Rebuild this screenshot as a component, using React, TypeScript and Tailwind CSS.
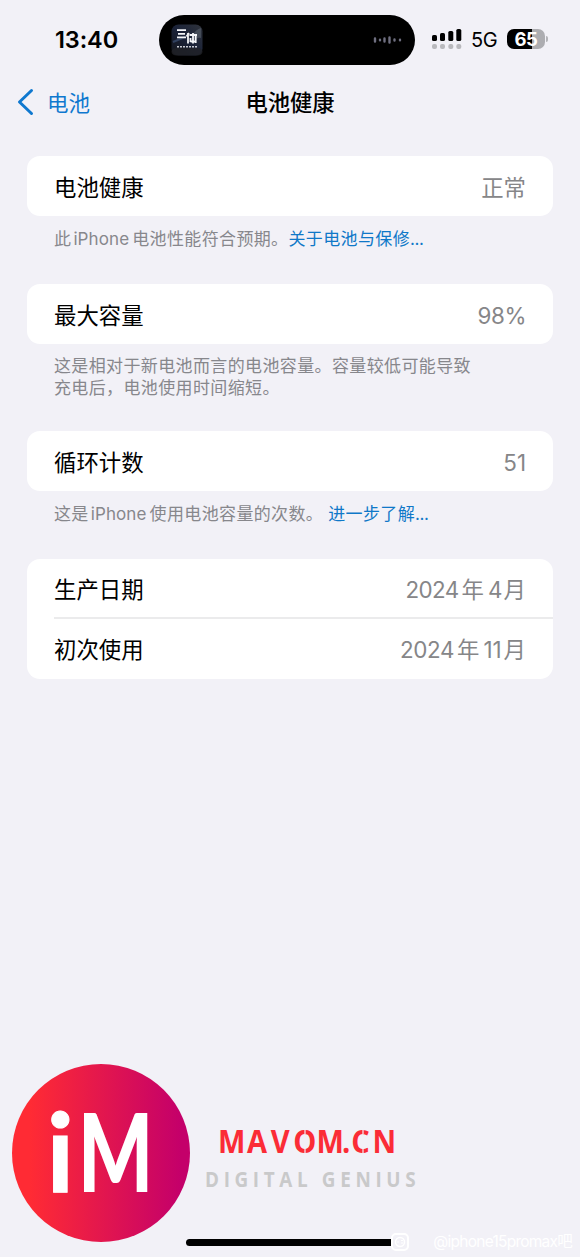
import React from "react";

type Row = { label: string; value: React.ReactNode };

function Latin({ children, className = "" }: { children: React.ReactNode; className?: string }) {
  return <span className={`font-['Inter'] ${className}`}>{children}</span>;
}

function StatusBar() {
  return (
    <div className="flex h-[80px] items-start">
      <div className="w-[159px] pl-[55px] pt-[24px] text-[23.5px] font-semibold leading-[32px] tracking-[-0.1px]">
        13:40
      </div>
      <div className="mt-[15px] flex h-[50px] w-[256px] items-center justify-between rounded-full bg-black pl-[12px] pr-[13px]">
        <svg width="32" height="32" viewBox="0 0 32 32">
          <defs>
            <linearGradient id="cover" x1="0" y1="1" x2="1" y2="0">
              <stop offset="0" stopColor="#14161c" />
              <stop offset="0.5" stopColor="#1a2238" />
              <stop offset="1" stopColor="#30343c" />
            </linearGradient>
          </defs>
          <rect x="0.5" y="0.5" width="31" height="31" rx="7" fill="url(#cover)" />
          <path d="M21 12 Q25 5 30 4 L30 14 Q26 13 22 18Z" fill="#59606d" opacity="0.6" />
          <path d="M2 18 L14 13" stroke="#31415f" strokeWidth="2" />
          <rect x="0.5" y="24" width="31" height="7.5" rx="5" fill="#202227" opacity="0.8" />
          <path
            d="M6 6.2H15M7 9.8H14M6 13.4H15M17 9V19.5M15.5 12.5L18 9M18.5 11H26M22 9V19.5M19.5 14V18M24.7 11V19M19.5 17.5H24.5"
            stroke="#f4f5f8"
            strokeWidth="1.8"
            fill="none"
          />
          <path d="M6 22.7H26" stroke="#c8cad0" strokeWidth="1.6" strokeDasharray="2 1" />
        </svg>
        <svg width="29" height="8" viewBox="0 0 29 8" stroke="#6f6f80" strokeLinecap="round" strokeWidth="2.4">
          <path d="M2 2.5V5.5M7 3.8V4.2M11.5 2.5V5.5M16.5 1.5V6.5M21.5 3.5V4.5M27 3.8V4.2" />
        </svg>
      </div>
      <svg className="ml-[16px] mt-[27px]" width="32" height="24" viewBox="0 0 32 24">
        <rect x="1" y="8" width="5" height="6" rx="1.6" />
        <rect x="9" y="6" width="5" height="8" rx="1.6" />
        <rect x="17.3" y="4" width="5" height="10" rx="1.6" />
        <rect x="25.3" y="2" width="5" height="12" rx="1.6" />
        <g fill="#b9b9bd">
          <rect x="1" y="17" width="5" height="5" rx="2" />
          <rect x="9" y="17" width="5" height="5" rx="2" />
          <rect x="17.3" y="17" width="5" height="5" rx="2" />
          <rect x="25.3" y="17" width="5" height="5" rx="2" />
        </g>
      </svg>
      <div className="ml-[8px] mt-[24px] w-[28px] text-[20px] leading-[32px] tracking-[-0.5px]">5G</div>
      <div className="ml-[8px] mt-[29px] flex items-center gap-px">
        <div className="h-[20px] w-[38px] rounded-[7px] bg-[linear-gradient(to_right,#000_25px,#adadb1_25px)] text-center text-[18.5px] font-bold leading-[20px] tracking-[-0.3px] text-white">
          65
        </div>
        <div className="h-[6px] w-[2px] rounded-r-full bg-[#b4b4b8]" />
      </div>
    </div>
  );
}

function NavBar() {
  return (
    <div className="grid h-[44px] grid-cols-3 items-center px-[17px]">
      <div className="flex items-center gap-[13px] text-[#0f78cf]">
        <svg width="17" height="28" viewBox="0 0 17 28" fill="none">
          <path d="M14.5 2.5L2.5 14L14.5 25.5" stroke="currentColor" strokeWidth="3" strokeLinecap="round" strokeLinejoin="round" />
        </svg>
        <span className="pt-[2px] text-[21.5px]">电池</span>
      </div>
      <div className="whitespace-nowrap pt-[2px] text-center text-[22.3px] font-medium">电池健康</div>
    </div>
  );
}

function Card({ rows }: { rows: Row[] }) {
  return (
    <div className="rounded-[13px] bg-white">
      {rows.map((row, i) => (
        <div key={row.label} className="pl-[27px]">
          <div
            className={`flex items-center justify-between pr-[27px] text-[22.4px] ${
              i > 0 ? "h-[62px] border-t-2 border-[#ebebec] pt-[1px]" : rows.length > 1 ? "h-[58px] pt-[3px]" : "h-[60px] pt-[3px]"
            }`}
          >
            <span>{row.label}</span>
            <span className="text-[#868688]">{row.value}</span>
          </div>
        </div>
      ))}
    </div>
  );
}

function Note({ children, className = "pt-[12px]" }: { children: React.ReactNode; className?: string }) {
  return (
    <div className={`whitespace-nowrap pl-[27px] text-[17px] leading-[22px] tracking-[0.37px] text-[#87878c] ${className}`}>
      {children}
    </div>
  );
}

function Brand() {
  return (
    <svg width="430" height="180" viewBox="0 0 430 180">
      <defs>
        <linearGradient id="disc" x1="0" y1="0" x2="1" y2="0">
          <stop offset="0.1" stopColor="#ff2b34" />
          <stop offset="0.95" stopColor="#c4006a" />
        </linearGradient>
      </defs>
      <circle cx="89" cy="89" r="89" fill="url(#disc)" />
      <g fontFamily="Lato" fontSize="109" fill="#fff">
        <text fontWeight="700" stroke="#fff" strokeWidth="1" transform="translate(34.5 128)">
          i
        </text>
        <text fontWeight="900" transform="translate(66 128) scale(0.725 1)">
          M
        </text>
      </g>
      <g fontFamily="Open Sans" fontWeight="700">
        <text
          x="0 33 60 85.5 112 141 151.5 175.5"
          fontSize="33"
          fill="#fb2c36"
          transform="translate(206 89) scale(0.88 1)"
        >
          MAVOM.CN
        </text>
        <text fontSize="21" fill="#c9c9ca" transform="translate(193 123) scale(0.9 1)" textLength="234">
          DIGITAL GENIUS
        </text>
      </g>
      {/* stencil cuts */}
      <path d="M293 63V70M293 83V91M351 63V70M351 83V91" stroke="#f2f1f7" strokeWidth="1.2" />
    </svg>
  );
}

export default function App() {
  return (
    <div className="relative flex h-[1257px] w-[580px] flex-col overflow-hidden bg-[#f2f1f7] font-['Inter','Noto_Sans_CJK_SC',sans-serif] text-black">
      <StatusBar />
      <NavBar />
      <main className="flex flex-col px-[27px] pt-[32px]">
        <section className="h-[128px]">
          <Card rows={[{ label: "电池健康", value: "正常" }]} />
          <Note>
            此<Latin className="ml-[2px] mr-[3px] tracking-[0.1px]">iPhone</Latin>电池性能符合预期。
            <span className="text-[#0f78c8]">
              关于电池与保修<span className="tracking-[-0.4px]">...</span>
            </span>
          </Note>
        </section>
        <section className="h-[147px]">
          <Card rows={[{ label: "最大容量", value: <span className="tracking-[-0.4px]">98%</span> }]} />
          <Note className="pt-[11px]">
            这是相对于新电池而言的电池容量。容量较低可能导致
            <br />
            充电后，电池使用时间缩短。
          </Note>
        </section>
        <section className="h-[128px]">
          <Card rows={[{ label: "循环计数", value: "51" }]} />
          <Note>
            这是<Latin className="ml-[2px] mr-[3px] tracking-[0.1px]">iPhone</Latin>使用电池容量的次数。
            <span className="ml-[5px] text-[#0f78c8]">
              进一步了解<span className="tracking-[-0.4px]">...</span>
            </span>
          </Note>
        </section>
        <Card
          rows={[
            {
              label: "生产日期",
              value: (
                <>
                  <span className="tracking-[-0.6px]">2024</span>
                  <span className="ml-[3px] mr-[4px]">年</span>
                  <span className="tracking-[-0.8px]">4</span>
                  <span className="ml-[2px]">月</span>
                </>
              ),
            },
            {
              label: "初次使用",
              value: (
                <>
                  <span className="tracking-[-0.4px]">2024</span>
                  <span className="ml-[3px] mr-[4px]">年</span>11<span className="ml-[2px]">月</span>
                </>
              ),
            },
          ]}
        />
      </main>
      <footer className="mt-auto pl-[12px]">
        <Brand />
        <div className="-mt-[5px] flex h-[18px] items-start">
          <div className="ml-[174px] h-[7px] w-[208px] rounded-full bg-black" />
        </div>
      </footer>
      <div className="absolute bottom-[5px] right-[8px] flex items-center gap-[24px] text-white">
        <svg width="18" height="18" viewBox="0 0 18 18" fill="none">
          <rect x="1" y="1" width="16" height="16" rx="4" fill="#f2f1f7" stroke="#fff" strokeWidth="2" />
          <circle cx="9" cy="9" r="4.5" stroke="#fff" strokeWidth="1.5" />
          <path d="M7 8V10M10 7.5H12M10 10H12" stroke="#fff" />
        </svg>
        <span className="text-[15.5px] leading-[20px] tracking-[-0.75px]">@iphone15promax吧</span>
      </div>
    </div>
  );
}
